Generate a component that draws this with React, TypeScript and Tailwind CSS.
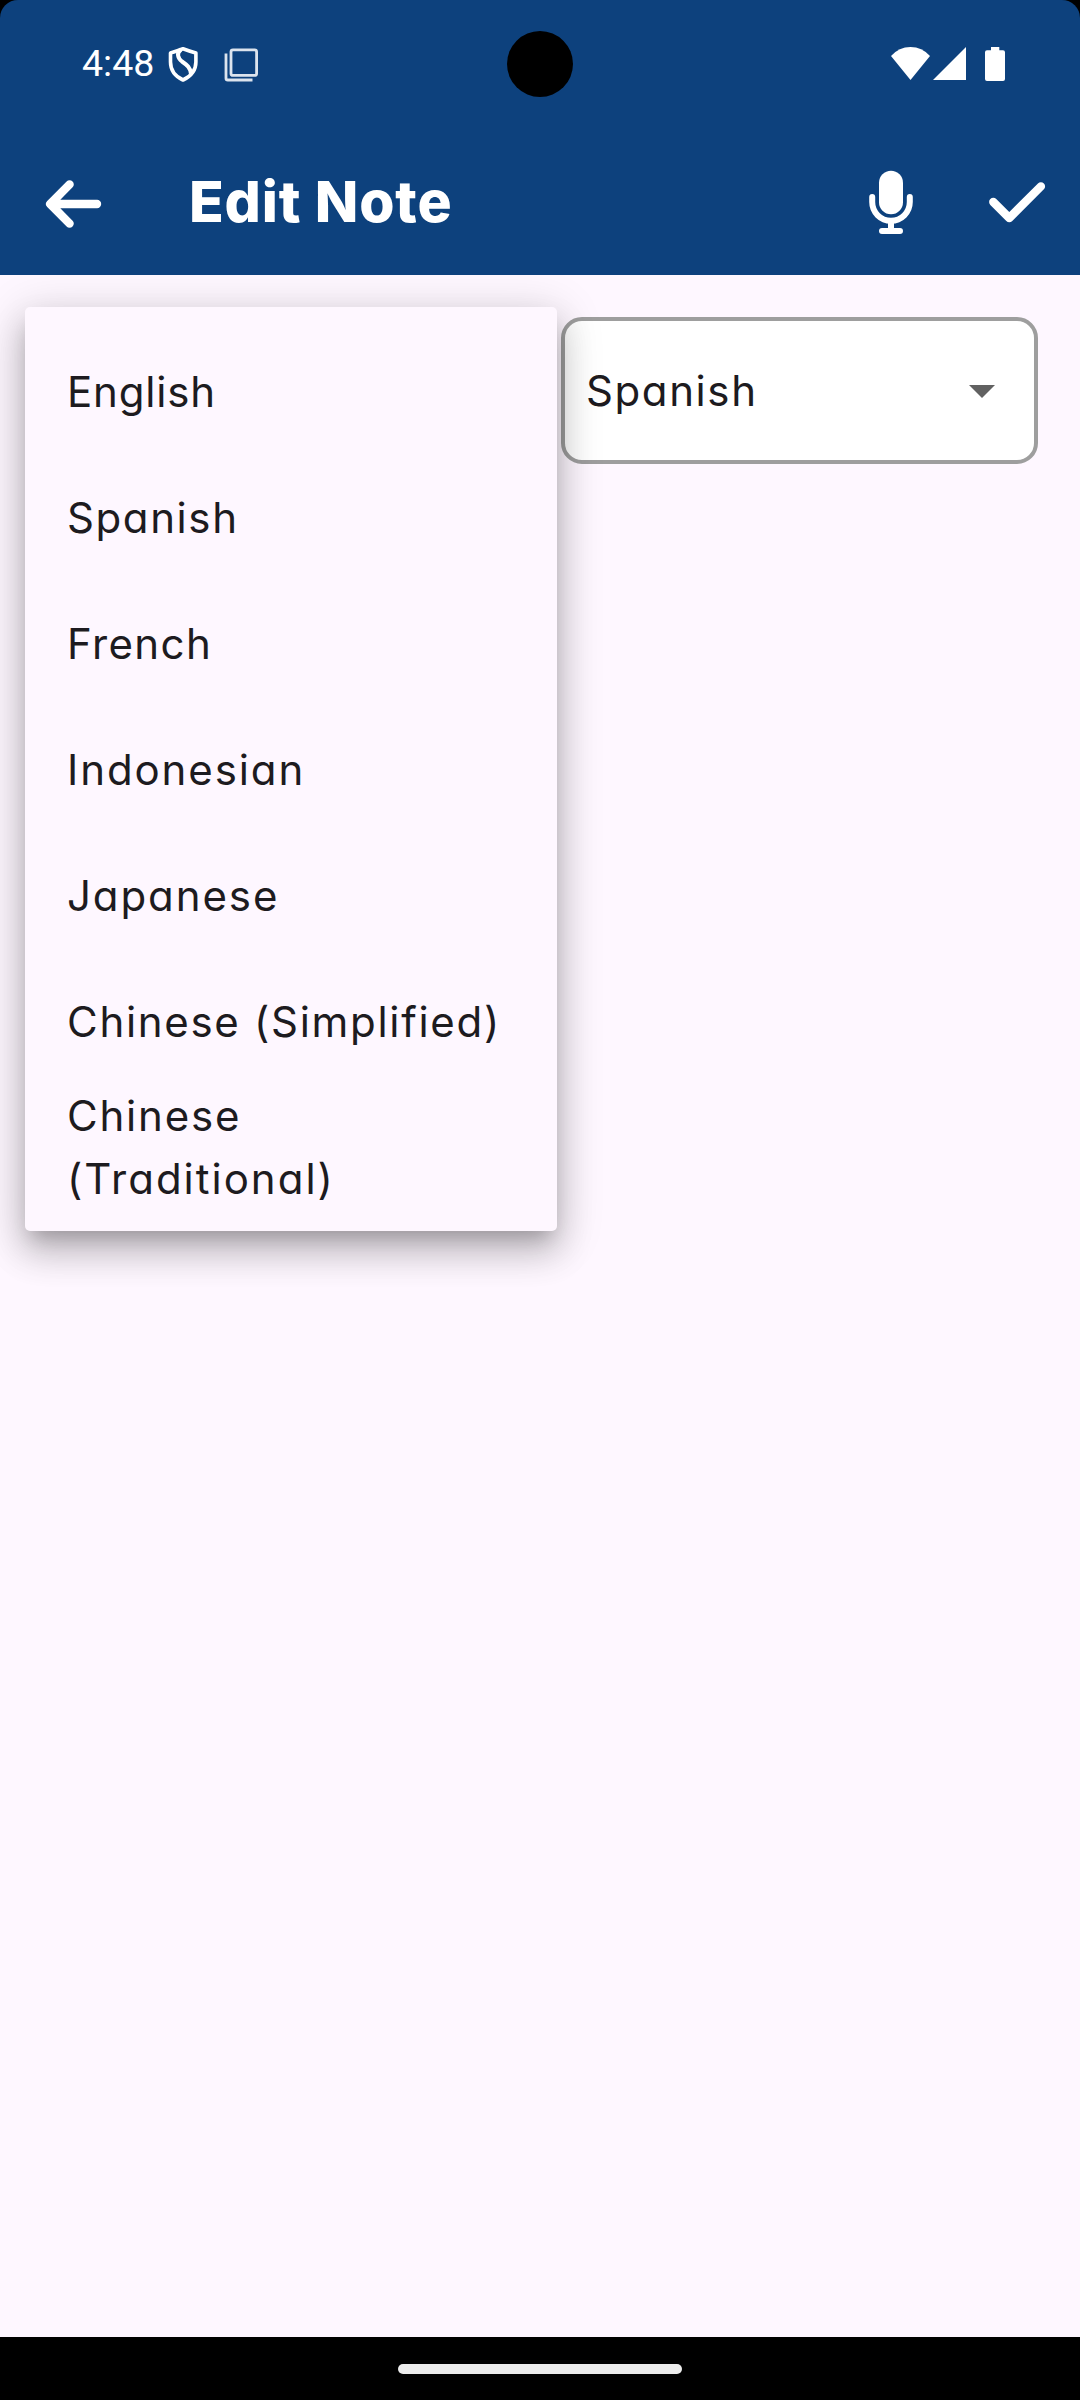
import type { ReactNode } from 'react';

function MenuItem({ children, className = '' }: { children: ReactNode; className?: string }) {
  return (
    <li className={`flex h-[126px] items-center text-[42px] leading-[63px] text-[#1d1b20] ${className}`}>
      {children}
    </li>
  );
}

function StatusBar() {
  return (
    <div className="relative flex h-32 items-center pr-[75px] pl-[82px]">
      <span className="w-[85px] font-[Roboto] text-[37.5px] leading-none">4:48</span>
      <svg className="h-[38px] w-8" viewBox="167 46 32 38" fill="none" stroke="white" strokeWidth="3.6" strokeLinejoin="round">
        <path d="M183 49.7 C179 51.2 175 52.6 170.5 54 V63 C170.5 71 175.5 77.5 183 81 C190.5 77.5 195.9 71 195.9 63 V54 C191 52.6 187 51.2 183 49.7 Z" />
        <path d="M181 50.5 C176 54 178 59.5 182 62.5 C187 66 190.5 68.5 191 75" strokeWidth="4" />
      </svg>
      <svg className="ml-[24px] h-9 w-9" viewBox="223 46 36 36" fill="none" stroke="#dce4ee" strokeWidth="2.8">
        <rect x="231" y="49.8" width="25.6" height="25.6" rx="2" />
        <path d="M226 53.5 V78.2 Q226 80 227.8 80 H252.5" />
      </svg>
      <div className="absolute top-[31px] left-[507px] size-[66px] rounded-full bg-black" />
      <svg className="ml-auto h-[34px] w-[39px]" viewBox="891 47 39 34" fill="white">
        <path d="M891 56 Q899 47 910.5 47 Q922 47 930 56 L910.5 80 Z" />
      </svg>
      <svg className="ml-[3px] h-[34px] w-[33px]" viewBox="933 47 33 34" fill="white">
        <path d="M966 47 V80 H933 Z" />
      </svg>
      <svg className="ml-[19px] h-[34px] w-5" viewBox="985 47 20 34" fill="white">
        <path d="M991 47 H999.3 V50.3 H1003 Q1005 50.3 1005 52.3 V79 Q1005 81 1003 81 H987 Q985 81 985 79 V52.3 Q985 50.3 987 50.3 H991 Z" />
      </svg>
    </div>
  );
}

function Toolbar() {
  return (
    <div className="flex h-[147px] items-center pr-8 pl-[44px]">
      <svg className="mt-[5px] h-[52px] w-[60px]" viewBox="44 178 60 52" fill="none" stroke="white" strokeWidth="8.4" strokeLinecap="round" strokeLinejoin="round">
        <path d="M69.6 184.4 L50.2 204 L69.6 223.6 M50.2 204 H97" />
      </svg>
      <h1 className="ml-[85px] text-[57px] leading-none font-extrabold tracking-[0.85px]">Edit Note</h1>
      <svg className="ml-auto h-16 w-12" viewBox="867 170 48 64" fill="none" stroke="white" strokeWidth="6" strokeLinecap="round">
        <rect x="879" y="170.7" width="24" height="43.6" rx="12" fill="white" stroke="none" />
        <path d="M872.2 197 V202 A18.8 18.8 0 0 0 909.8 202 V197 M882 231 H900" />
        <path d="M891 222 V230" strokeLinecap="butt" />
      </svg>
      <svg className="ml-[71px] h-[44px] w-[62px]" viewBox="986 180 62 44" fill="none" stroke="white" strokeWidth="8.4" strokeLinecap="round" strokeLinejoin="round">
        <path d="M993.3 202 L1009.3 218 L1040.9 186.4" />
      </svg>
    </div>
  );
}

export default function App() {
  return (
    <div className="bg-black">
      <div className="flex h-[2400px] w-[1080px] flex-col overflow-hidden font-['Inter',sans-serif] [font-feature-settings:'cv11']">
        <header className="relative z-10 h-[275px] rounded-t-[18px] bg-[#0d417d] text-white">
          <StatusBar />
          <Toolbar />
        </header>
        <main className="relative flex-1 overflow-hidden bg-[#fef7ff] pt-[42px]">
          <div className="flex justify-end pr-[42px]">
            <div className="flex h-[147px] w-[477px] items-center justify-between rounded-[21px] border-4 border-[#9e9e9e] bg-white pr-[39px] pl-[21px]">
              <span className="text-[42px] leading-none tracking-[1.6px] text-[#1d1b20]">Spanish</span>
              <svg className="mt-[2px] h-[13px] w-[26px]" viewBox="0 0 26 13" fill="#616161">
                <path d="M0 0 H26 L13 13 Z" />
              </svg>
            </div>
          </div>
          <ul className="absolute top-8 left-[25px] h-[924px] w-[532px] rounded-[5px] bg-[#fef7ff] py-[21px] pl-[42px] shadow-[0_13px_18px_-8px_rgba(0,0,0,0.2),0_21px_34px_3px_rgba(0,0,0,0.16),0_8px_46px_5px_rgba(0,0,0,0.14)]">
            <MenuItem className="tracking-[0.8px]">English</MenuItem>
            <MenuItem className="tracking-[1.6px]">Spanish</MenuItem>
            <MenuItem className="tracking-[1.4px]">French</MenuItem>
            <MenuItem className="tracking-[1.9px]">Indonesian</MenuItem>
            <MenuItem className="tracking-[1.9px]">Japanese</MenuItem>
            <MenuItem className="tracking-[1.7px]">Chinese (Simplified)</MenuItem>
            <MenuItem>
              <div>
                <p className="tracking-[1.8px]">Chinese</p>
                <p className="tracking-[2px]">(Traditional)</p>
              </div>
            </MenuItem>
          </ul>
        </main>
        <footer className="flex h-[63px] justify-center bg-black pt-[27px]">
          <div className="h-[10px] w-[284px] rounded-full bg-[#ececec]" />
        </footer>
      </div>
    </div>
  );
}
